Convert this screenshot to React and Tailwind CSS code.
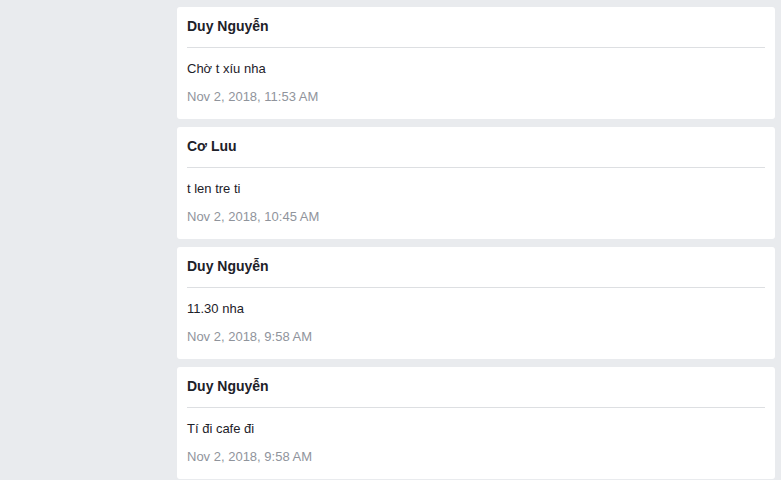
const messages = [
  { name: 'Duy Nguyễn', text: 'Chờ t xíu nha', time: 'Nov 2, 2018, 11:53 AM' },
  { name: 'Cơ Luu', text: 't len tre ti', time: 'Nov 2, 2018, 10:45 AM' },
  { name: 'Duy Nguyễn', text: '11.30 nha', time: 'Nov 2, 2018, 9:58 AM' },
  { name: 'Duy Nguyễn', text: 'Tí đi cafe đi', time: 'Nov 2, 2018, 9:58 AM' },
];

const MessageCard = ({ msg }) => (
  <div className="bg-white rounded-[3px] px-[10px] pt-[9px] pb-[12px]">
    <h3 className="text-[14px] leading-[20px] font-bold text-[#1d2129]">{msg.name}</h3>
    <div className="border-t border-[#dddfe2] mt-[11px]" />
    <p className="text-[13px] leading-[20px] text-[#1d2129] mt-[11px]">{msg.text}</p>
    <p className="text-[13px] leading-[20px] text-[#90949c] mt-[8px]">{msg.time}</p>
  </div>
);

export default function App() {
  return (
    <div
      className="min-h-[480px] bg-[#e9ebee] flex pt-[7px]"
      style={{ fontFamily: '"Liberation Sans", Arial, sans-serif' }}
    >
      <div className="w-[177px] shrink-0" />
      <div className="w-[598px] flex flex-col gap-[8px]">
        {messages.map((msg, i) => (
          <MessageCard key={i} msg={msg} />
        ))}
      </div>
    </div>
  );
}
